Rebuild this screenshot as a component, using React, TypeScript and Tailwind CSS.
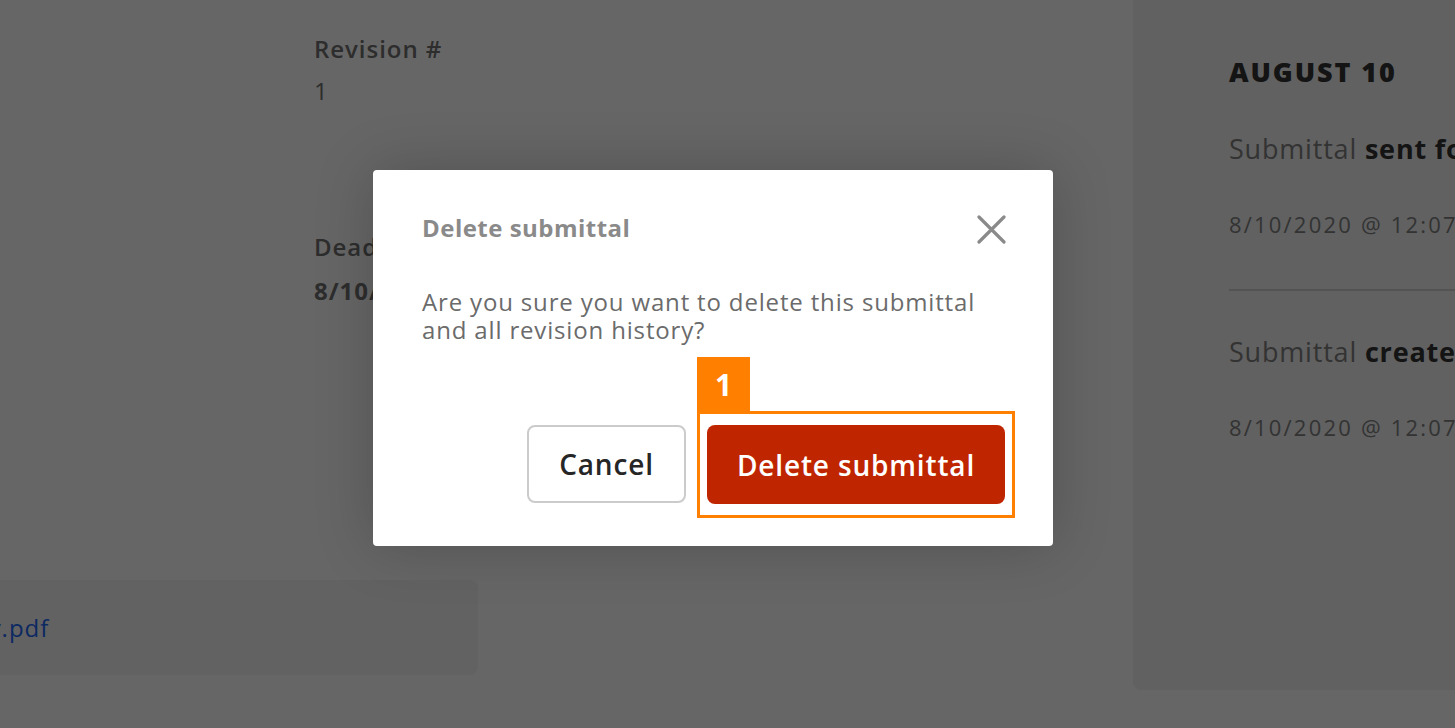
const FONT = { fontFamily: '"Open Sans", "Noto Sans", sans-serif' };

function CloseIcon() {
  return (
    <svg width="29" height="29" viewBox="0 0 29 29" fill="none" stroke="currentColor" strokeWidth="3.2" strokeLinecap="round">
      <path d="M2 2 L27 27 M27 2 L2 27" />
    </svg>
  );
}

function ActivityItem({ action, time }: { action: string; time: string }) {
  return (
    <div>
      <p className="text-[27px] leading-[32px] tracking-[0.03em] text-[#7f7f7f] whitespace-nowrap">
        Submittal <span className="font-bold text-[#333]">{action}</span>
      </p>
      <p className="mt-[45px] text-[22px] leading-[28px] tracking-[0.1em] text-[#808080] whitespace-nowrap">{time}</p>
    </div>
  );
}

export default function App() {
  return (
    <div className="relative w-full h-[728px] overflow-hidden bg-white" style={FONT}>
      {/* page behind the modal */}
      <div className="flex h-full">
        <main className="flex-1 flex flex-col">
          <div className="pl-[314px] pt-[35px] tracking-[0.04em] text-[24px] leading-[28px] text-[#707070]">
            <p className="font-semibold">Revision #</p>
            <p className="mt-[14px]">1</p>
            <p className="mt-[128px] font-semibold">Deadline</p>
            <p className="mt-[16px] font-bold">8/10/2020</p>
          </div>
          <div className="mt-[275px] -ml-[200px] w-[678px] h-[95px] rounded-lg bg-[#f5f5f5] flex items-center pl-[31px]">
            <span className="text-[24px] tracking-[0.04em] text-[#1f68f5] whitespace-nowrap">Submittal_Rev.pdf</span>
          </div>
        </main>
        <aside className="w-[322px] shrink-0 h-[700px] -mt-[10px] bg-[#f2f2f2] rounded-bl-lg pl-[96px] pt-[66px] overflow-hidden">
          <h2 className="text-[27px] leading-[32px] font-extrabold tracking-[0.07em] text-[#333] whitespace-nowrap">AUGUST 10</h2>
          <div className="mt-[45px]">
            <ActivityItem action="sent for review" time="8/10/2020 @ 12:07 PM" />
          </div>
          <div className="mt-[51px] w-[400px] border-t-2 border-[#cfcfcf]" />
          <div className="mt-[45px]">
            <ActivityItem action="created" time="8/10/2020 @ 12:07 PM" />
          </div>
        </aside>
      </div>

      {/* modal overlay */}
      <div className="absolute inset-0 bg-black/60 flex items-start pl-[373px] pt-[170px]">
        <div className="w-[680px] h-[376px] bg-white rounded-[4px] shadow-[0_0_60px_rgba(0,0,0,0.2)] pl-[49px] pr-[48px] pt-[44px] flex flex-col">
          <div className="flex items-center justify-between h-[28px]">
            <h3 className="text-[24px] leading-[28px] font-bold tracking-[0.02em] text-[#8a8a8a]">Delete submittal</h3>
            <button className="text-[#8a8a8a] -mr-[1px] mt-[2px]" aria-label="Close">
              <CloseIcon />
            </button>
          </div>
          <p className="mt-[46px] w-[590px] text-[24px] leading-[28px] tracking-[0.035em] text-[#6b6b6b]">
            Are you sure you want to delete this submittal and all revision history?
          </p>
          <div className="mt-[81px] flex justify-end gap-[21px]">
            <button className="w-[159px] h-[78px] rounded-lg border-2 border-[#cbcbcb] text-[28px] font-semibold tracking-[0.03em] text-[#262626]">
              Cancel
            </button>
            <div className="relative">
              <button className="w-[298px] h-[79px] rounded-lg bg-[#bf2600] text-[28px] font-semibold tracking-[0.03em] text-white">
                Delete submittal
              </button>
              <span className="absolute -left-[10px] -right-[10px] -top-[14px] -bottom-[14px] border-[3px] border-[#ff7f00] pointer-events-none" />
              <span className="absolute -left-[10px] -top-[68px] w-[53px] h-[54px] bg-[#ff7f00] text-white text-[30px] font-bold flex items-center justify-center">
                1
              </span>
            </div>
          </div>
        </div>
      </div>
    </div>
  );
}
